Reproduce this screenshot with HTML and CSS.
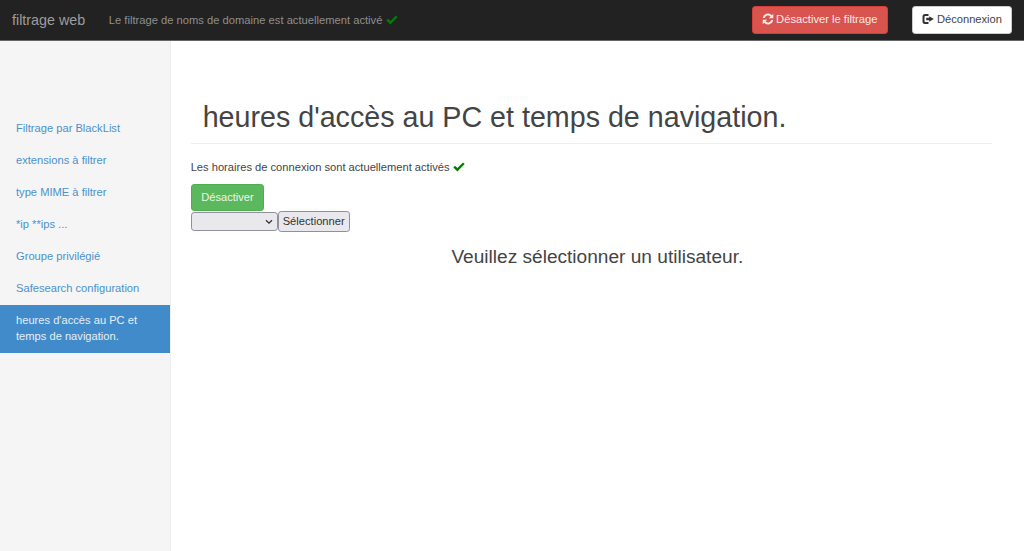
FILE: index.html
```html
<!DOCTYPE html>
<html lang="fr">
<head>
<meta charset="utf-8">
<title>filtrage web</title>
<link rel="stylesheet" href="styles.css">
</head>
<body>
<nav class="navbar">
  <a class="brand" href="#">filtrage web</a>
  <p class="status">Le filtrage de noms de domaine est actuellement activé
    <svg class="check" viewBox="0 0 12 10"><path d="M0.3 5.4 L2 3.7 L4.4 6 L10 0.4 L11.7 2.1 L4.4 9.4 Z"/></svg>
  </p>
  <div class="actions">
    <a class="btn btn-danger" href="#"><svg class="ico" viewBox="0 0 12 12"><path d="M11.3.8v4.5H6.8l1.7-1.7A3.3 3.3 0 0 0 2.8 5H.8a5.3 5.3 0 0 1 9.1-2.8zM.7 11.2V6.7h4.5L3.5 8.4A3.3 3.3 0 0 0 9.2 7h2a5.3 5.3 0 0 1-9.1 2.8z"/></svg>Désactiver le filtrage</a>
    <a class="btn btn-default" href="#"><svg class="ico" viewBox="0 0 12 12"><path d="M3 1h3.5v2H3.2q-.7 0-.7.7v4.6q0 .7.7.7h3.3v2H3Q.5 11 .5 8.5v-5Q.5 1 3 1zM7.2 3.2 11.8 6 7.2 8.8V7.2H4.2V4.8h3z"/></svg>Déconnexion</a>
  </div>
</nav>
<div class="layout">
  <ul class="sidebar">
    <li><a href="#">Filtrage par BlackList</a></li>
    <li><a href="#">extensions à filtrer</a></li>
    <li><a href="#">type MIME à filtrer</a></li>
    <li><a href="#">*ip **ips ...</a></li>
    <li><a href="#">Groupe privilégié</a></li>
    <li><a href="#">Safesearch configuration</a></li>
    <li class="active"><a href="#">heures d'accès au PC et temps de navigation.</a></li>
  </ul>
  <main class="main">
    <h1 class="page-header">heures d'accès au PC et temps de navigation.</h1>
    <p class="info">Les horaires de connexion sont actuellement activés
      <svg class="check" viewBox="0 0 12 10"><path d="M0.3 5.4 L2 3.7 L4.4 6 L10 0.4 L11.7 2.1 L4.4 9.4 Z"/></svg>
    </p>
    <a class="btn btn-success" href="#">Désactiver</a>
    <form class="user-form">
      <select class="user-select"><option></option></select><button class="select-btn" type="button">Sélectionner</button>
    </form>
    <h3 class="prompt">Veuillez sélectionner un utilisateur.</h3>
  </main>
</div>
</body>
</html>
```
FILE: styles.css
```css
* { box-sizing: border-box; }
html, body { margin: 0; height: 100%; }
body {
  font-family: "Liberation Sans", Arial, sans-serif;
  font-size: 11.15px;
  line-height: 16px;
  color: #444;
  background: #fff;
}
a { text-decoration: none; }

.navbar {
  display: flex;
  align-items: center;
  height: 41px;
  background: #222;
  border-bottom: 1px solid #666;
  padding-left: 12px;
}
.brand { color: #9d9d9d; font-size: 14.33px; }
.status { margin: 0 0 0 23.5px; color: #8f8f8f; font-size: 11.2px; }
.actions { margin-left: auto; display: flex; gap: 24px; padding-right: 12px; }

.btn {
  display: inline-block;
  height: 28px;
  padding: 4px 9px;
  border: 1px solid transparent;
  border-radius: 3.2px;
  line-height: 16px;
  white-space: nowrap;
}
.btn-danger { padding: 4px 10px 4px 9px; background: #d9534f; border-color: #d43f3a; color: #fbe9e8; font-size: 11.2px; }
.btn-danger .ico { margin-right: 2px; }
.btn-default { background: #fff; border-color: #ccc; color: #444; }
.btn-success { height: 27px; padding: 4px 9.5px; background: #5cb85c; border-color: #4cae4c; color: #eaf6ea; }

.ico { width: 12px; height: 12px; margin-right: 2.5px; fill: currentColor; vertical-align: -2px; }
.btn-default .ico { fill: #333; }
.check { width: 12px; height: 10px; fill: #008000; vertical-align: -1px; }

.layout { display: flex; min-height: 510px; }
.sidebar {
  flex: 0 0 170.67px;
  list-style: none;
  margin: 0;
  padding: 71px 0 0;
  background: #f5f5f5;
  border-right: 1px solid #eee;
}
.sidebar a { display: block; padding: 8px 16px; color: #4d91cc; }
.sidebar .active { margin-top: 1px; }
.sidebar .active a { padding: 7px 16px 9px; background: #428bca; color: #e3eef7; }

.main { flex: 1; padding: 0 20px; }
.page-header {
  margin: 60px 12px 15px 0;
  padding: 0 12px 10px;
  font-size: 28.66px;
  font-weight: 500;
  line-height: 32px;
  border-bottom: 1px solid #eee;
}
.info { margin: 0 0 9px; }
.user-form { display: flex; align-items: center; }
.user-select {
  appearance: none;
  width: 87px;
  height: 19px;
  border: 1px solid #8f8f9d;
  border-radius: 3.2px;
  background: #e9e9ed url("data:image/svg+xml,%3Csvg xmlns='http://www.w3.org/2000/svg' viewBox='0 0 8 6'%3E%3Cpath d='M1 1.2l3 3 3-3' fill='none' stroke='%23333' stroke-width='1.3'/%3E%3C/svg%3E") no-repeat right 4px center / 8px 6px;
  font: inherit;
}
.select-btn {
  width: 72px;
  height: 21px;
  padding: 0 0 2px;
  border: 1px solid #8f8f9d;
  border-radius: 3.2px;
  background: #e9e9ed;
  font: inherit;
  color: #333;
}
.prompt {
  margin: 13px 0 0;
  font-size: 19.1px;
  font-weight: 500;
  line-height: 24px;
  text-align: center;
}
```
